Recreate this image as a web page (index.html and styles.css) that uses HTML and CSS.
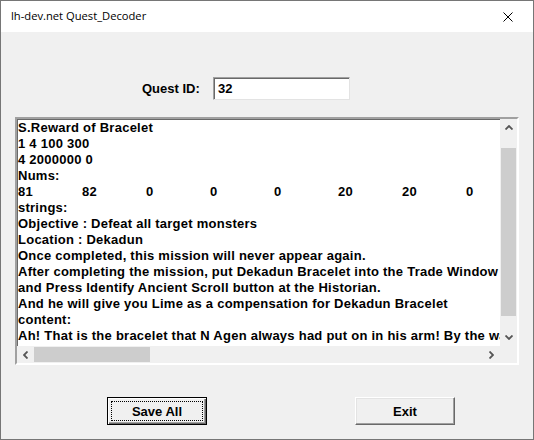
FILE: index.html
```html
<!DOCTYPE html>
<html>
<head>
<meta charset="utf-8">
<link rel="stylesheet" href="styles.css">
</head>
<body>
<div class="window">
  <div class="titlebar">
    <span class="title">lh-dev.net Quest_Decoder</span>
    <svg class="close" width="10" height="10" viewBox="0 0 10 10"><path d="M0.5 0.5 L9.5 9.5 M9.5 0.5 L0.5 9.5" stroke="#000" stroke-width="1" fill="none"/></svg>
  </div>
  <div class="client">
    <div class="quest-row">
      <label class="label">Quest ID:</label>
      <div class="input">32</div>
    </div>
    <div class="memo">
      <div class="memo-text">S.Reward of Bracelet
1 4 100 300
4 2000000 0
Nums:
81	82	0	0	0	20	20	0
strings:
Objective : Defeat all target monsters
Location : Dekadun
Once completed, this mission will never appear again.
After completing the mission, put Dekadun Bracelet into the Trade Window
and Press Identify Ancient Scroll button at the Historian.
And he will give you Lime as a compensation for Dekadun Bracelet
content:
Ah! That is the bracelet that N Agen always had put on in his arm! By the way, where did you find it?</div>
      <div class="vscroll">
        <div class="sbtn"><svg width="8" height="5" viewBox="0 0 8 5"><path d="M0.5 4.5 L4 1 L7.5 4.5" stroke="#555" stroke-width="1.8" fill="none"/></svg></div>
        <div class="vtrack"><div class="vthumb"></div></div>
        <div class="sbtn"><svg width="8" height="5" viewBox="0 0 8 5"><path d="M0.5 0.5 L4 4 L7.5 0.5" stroke="#555" stroke-width="1.8" fill="none"/></svg></div>
      </div>
      <div class="hscroll">
        <div class="sbtn"><svg width="5" height="8" viewBox="0 0 5 8"><path d="M4.5 0.5 L1 4 L4.5 7.5" stroke="#555" stroke-width="1.8" fill="none"/></svg></div>
        <div class="htrack"><div class="hthumb"></div></div>
        <div class="sbtn"><svg width="5" height="8" viewBox="0 0 5 8"><path d="M0.5 0.5 L4 4 L0.5 7.5" stroke="#555" stroke-width="1.8" fill="none"/></svg></div>
      </div>
      <div class="corner"></div>
    </div>
    <div class="buttons">
      <div class="btn btn-default"><span class="focus">Save All</span></div>
      <div class="btn">Exit</div>
    </div>
  </div>
</div>
</body>
</html>
```
FILE: styles.css
```css
html, body {
  margin: 0;
  padding: 0;
  width: 534px;
  height: 440px;
  overflow: hidden;
  background: #f0f0f0;
}

.window {
  box-sizing: border-box;
  width: 534px;
  height: 440px;
  border: 1px solid #767676;
  display: flex;
  flex-direction: column;
  background: #f0f0f0;
}

.titlebar {
  height: 31px;
  background: #ffffff;
  display: flex;
  align-items: center;
  justify-content: space-between;
  padding: 0 20px 0 10px;
  font-family: "Open Sans", "Noto Sans", sans-serif;
  font-size: 11.2px;
  color: #000;
}

.title {
  position: relative;
  top: -1px;
}

.close {
  display: block;
}

.client {
  flex: 1;
  display: flex;
  flex-direction: column;
  font-family: "Liberation Sans", Arial, sans-serif;
  font-weight: bold;
  font-size: 13px;
  color: #000;
}

.quest-row {
  display: flex;
  align-items: center;
  margin-top: 45px;
  padding-left: 141px;
  gap: 13px;
  height: 23px;
}

.label {
  width: 58px;
}

.input {
  box-sizing: border-box;
  width: 137px;
  height: 23px;
  background: #fff;
  border-top: 1px solid #a0a0a0;
  border-left: 1px solid #a0a0a0;
  border-right: 1px solid #e3e3e3;
  border-bottom: 1px solid #e3e3e3;
  box-shadow: inset 1px 1px 0 #696969;
  padding: 3px 0 0 4px;
  line-height: 16px;
}

.memo {
  box-sizing: border-box;
  margin: 17px 0 0 14px;
  width: 504px;
  height: 248px;
  background: #fff;
  border-top: 2px solid #a0a0a0;
  border-left: 2px solid #a0a0a0;
  border-right: 2px solid #ffffff;
  border-bottom: 2px solid #ffffff;
  box-shadow: inset 1px 1px 0 #696969, inset -1px -1px 0 #e3e3e3;
  display: grid;
  grid-template-columns: 1fr 17px;
  grid-template-rows: 1fr 17px;
  overflow: hidden;
}

.memo-text {
  white-space: pre;
  tab-size: 64px;
  -moz-tab-size: 64px;
  line-height: 16px;
  letter-spacing: 0.25px;
  padding: 1px 0 0 1px;
  overflow: hidden;
}

.vscroll {
  background: #f0f0f0;
  display: flex;
  flex-direction: column;
}

.hscroll {
  background: #f0f0f0;
  display: flex;
  flex-direction: row;
}

.corner {
  background: #f0f0f0;
}

.sbtn {
  width: 17px;
  height: 17px;
  display: flex;
  align-items: center;
  justify-content: center;
  flex: none;
}

.vtrack {
  flex: 1;
  padding: 12px 1px 0 1px;
}

.vthumb {
  height: 168px;
  background: #cdcdcd;
}

.htrack {
  flex: 1;
  padding: 1px 0 1px 0;
}

.hthumb {
  width: 116px;
  height: 100%;
  background: #cdcdcd;
}

.buttons {
  display: flex;
  margin-top: 32px;
  padding-left: 106px;
  gap: 148px;
}

.btn {
  box-sizing: border-box;
  width: 100px;
  height: 28px;
  background: #f0f0f0;
  border-top: 1px solid #ffffff;
  border-left: 1px solid #ffffff;
  border-right: 1px solid #696969;
  border-bottom: 1px solid #696969;
  box-shadow: inset -1px -1px 0 #a0a0a0, inset 1px 1px 0 #e3e3e3;
  display: flex;
  align-items: center;
  justify-content: center;
  font-size: 13px;
}

.btn-default {
  border: 1px solid #000;
  box-shadow: inset 1px 1px 0 #ffffff, inset -1px -1px 0 #696969, inset -2px -2px 0 #a0a0a0;
  padding: 3px;
}

.focus {
  flex: 1;
  align-self: stretch;
  display: flex;
  align-items: center;
  justify-content: center;
  border: 1px dotted #000;
}
```
